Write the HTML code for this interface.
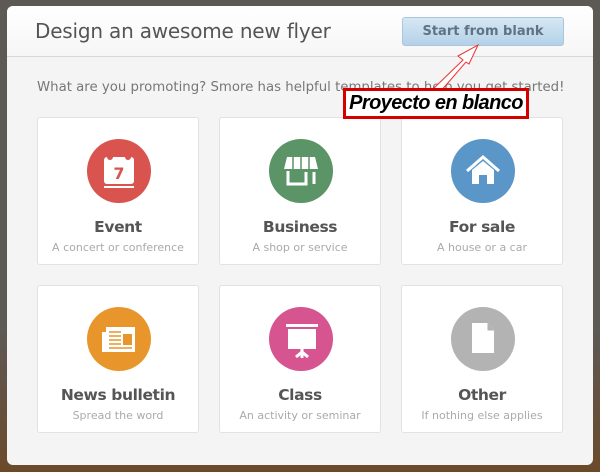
<!DOCTYPE html>
<html><head><style>
*{margin:0;padding:0;box-sizing:border-box}
body{width:600px;height:472px;overflow:hidden;background:linear-gradient(#5d5955 0%,#5d5955 70%,#6b4a2a 100%);font-family:"DejaVu Sans","Liberation Sans",sans-serif;position:relative}
.dlg{position:absolute;left:7px;top:6px;width:586px;height:459px;background:#f4f4f4;border-radius:6px;overflow:hidden}
.hd{height:51px;background:linear-gradient(#fff,#f6f6f6);border-bottom:1px solid #d8d8d8;position:relative}
.hd h1{position:absolute;left:28px;top:13px;font-size:20px;font-weight:normal;color:#555;letter-spacing:-0.2px}
.btn{position:absolute;left:395px;top:11px;width:162px;height:29px;border:1px solid #a9c6dc;border-radius:3px;background:linear-gradient(#d6e7f4,#b4d1e8);color:#5f7384;font-weight:bold;font-size:13px;text-align:center;line-height:27px}
.intro{position:absolute;left:30px;top:74px;font-size:13.3px;color:#777;white-space:nowrap}
.card{position:absolute;width:162px;height:148px;background:#fff;border:1px solid #e2e2e2;border-radius:3px;text-align:center}
.circ{position:absolute;left:49px;top:21px;width:64px;height:64px;border-radius:50%}
.t{position:absolute;left:0;right:0;top:100px;font-size:15.5px;font-weight:bold;color:#555;letter-spacing:-0.4px}
.s{position:absolute;left:0;right:0;top:123px;font-size:11px;color:#aaa}
.lbl{position:absolute;left:343px;top:88px;width:186px;height:31px;border:3px solid #d40000;background:#fff;font-family:"Liberation Sans",sans-serif;font-style:italic;font-weight:bold;font-size:20px;color:#000;text-align:center;line-height:25px;white-space:nowrap;letter-spacing:-0.6px}
</style></head><body>
<div class="dlg">
<div class="hd"><h1>Design an awesome new flyer</h1><div class="btn">Start from blank</div></div>
<div class="intro">What are you promoting? Smore has helpful templates to help you get started!</div>

<div class="card" style="left:30px;top:111px"><div class="circ" style="background:#d9534f">
<svg width="64" height="64" viewBox="0 0 64 64"><rect x="17" y="18" width="30" height="27" rx="3" fill="#fff"/><rect x="17" y="47" width="30" height="2" fill="#fff"/><circle cx="23" cy="18" r="3" fill="#d9534f"/><circle cx="41" cy="18" r="3" fill="#d9534f"/><text x="32" y="40" font-size="16" font-weight="bold" fill="#d9534f" text-anchor="middle" font-family="DejaVu Sans">7</text></svg></div>
<div class="t">Event</div><div class="s">A concert or conference</div></div>

<div class="card" style="left:212px;top:111px"><div class="circ" style="background:#5a9467">
<svg width="64" height="64" viewBox="0 0 64 64"><path d="M18 18h28l3 12H15z" fill="#fff"/><path d="M24 18v12M32 18v12M40 18v12" stroke="#5a9467" stroke-width="1.5"/><path d="M19 32v13h18V33M45 33v12" stroke="#fff" stroke-width="3" fill="none"/></svg></div>
<div class="t">Business</div><div class="s">A shop or service</div></div>

<div class="card" style="left:394px;top:111px"><div class="circ" style="background:#5b96c8">
<svg width="64" height="64" viewBox="0 0 64 64"><path d="M16 32L32 18l16 14" stroke="#fff" stroke-width="3" fill="none"/><path d="M21 31v14h22V31L32 22z" fill="#fff"/><rect x="28" y="36" width="8" height="9" fill="#5b96c8"/></svg></div>
<div class="t">For sale</div><div class="s">A house or a car</div></div>

<div class="card" style="left:30px;top:279px"><div class="circ" style="background:#e8962b">
<svg width="64" height="64" viewBox="0 0 64 64"><rect x="19" y="20" width="29" height="25" fill="#fff"/><rect x="15" y="25" width="4" height="20" fill="#fff"/><path d="M22 25h12M22 29h12M22 33h12M22 37h12M22 41h23" stroke="#e8962b" stroke-width="1.5"/><rect x="36" y="27" width="9" height="11" fill="#e8962b"/></svg></div>
<div class="t">News bulletin</div><div class="s">Spread the word</div></div>

<div class="card" style="left:212px;top:279px"><div class="circ" style="background:#d65490">
<svg width="64" height="64" viewBox="0 0 64 64"><rect x="17" y="17" width="32" height="3" fill="#fff"/><rect x="19" y="22" width="28" height="20" fill="#fff"/><path d="M33 42v9M27 50l6-5 6 5" stroke="#fff" stroke-width="3" fill="none"/></svg></div>
<div class="t">Class</div><div class="s">An activity or seminar</div></div>

<div class="card" style="left:394px;top:279px"><div class="circ" style="background:#b3b3b3">
<svg width="64" height="64" viewBox="0 0 64 64"><path d="M21 16h16l6 7v23H21z" fill="#fff"/><path d="M37 16v7h6" fill="#b3b3b3" stroke="#b3b3b3"/></svg></div>
<div class="t">Other</div><div class="s">If nothing else applies</div></div>
</div>

<svg style="position:absolute;left:0;top:0" width="600" height="472"><path d="M432 90 L463 60 L458 56 L478 45 L469 64 L466 62 L440 92" fill="#fff" stroke="#e33" stroke-width="1"/></svg>
<div class="lbl">Proyecto en blanco</div>
</body></html>
